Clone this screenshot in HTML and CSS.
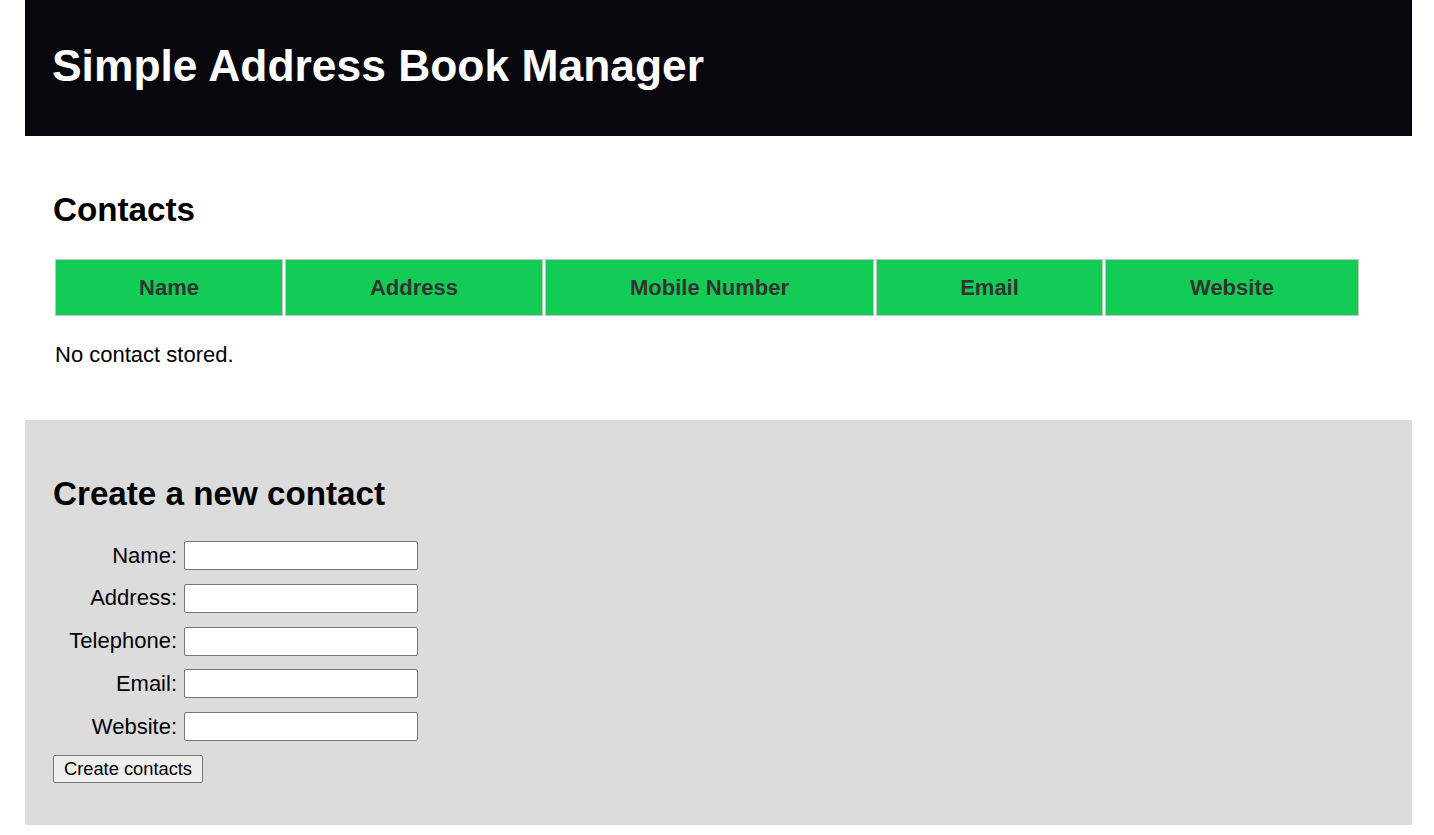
FILE: index.html
```html
<!DOCTYPE html>
<html lang="en">
<head>
<meta charset="utf-8">
<title>Simple Address Book Manager</title>
<link rel="stylesheet" href="styles.css">
</head>
<body>
<div class="page">
  <header class="masthead">
    <h1 class="title">Simple Address Book Manager</h1>
  </header>
  <section class="contacts">
    <h2 class="section-title">Contacts</h2>
    <table class="contact-table">
      <colgroup>
        <col class="c-name">
        <col class="c-address">
        <col class="c-mobile">
        <col class="c-email">
        <col class="c-website">
      </colgroup>
      <thead>
        <tr>
          <th>Name</th>
          <th>Address</th>
          <th>Mobile Number</th>
          <th>Email</th>
          <th>Website</th>
        </tr>
      </thead>
    </table>
    <p class="empty">No contact stored.</p>
  </section>
  <section class="create">
    <h2 class="section-title">Create a new contact</h2>
    <form class="contact-form">
      <label class="field-label" for="f-name">Name:</label>
      <input class="field-input" id="f-name" type="text">
      <label class="field-label" for="f-address">Address:</label>
      <input class="field-input" id="f-address" type="text">
      <label class="field-label" for="f-tel">Telephone:</label>
      <input class="field-input" id="f-tel" type="text">
      <label class="field-label" for="f-email">Email:</label>
      <input class="field-input" id="f-email" type="text">
      <label class="field-label" for="f-web">Website:</label>
      <input class="field-input" id="f-web" type="text">
      <div class="actions">
        <button class="submit" type="button">Create contacts</button>
      </div>
    </form>
  </section>
</div>
</body>
</html>
```

FILE: styles.css
```css
html, body {
  margin: 0;
  padding: 0;
  background: #ffffff;
}

body {
  font-family: "Liberation Sans", Arial, sans-serif;
  font-size: 22px;
  color: #000;
}

.page {
  margin-left: 25px;
  width: 1387px;
  padding-bottom: 10px;
}

.masthead {
  background: #08070d;
  height: 136px;
  display: flex;
  align-items: center;
  padding: 0 27px 4px;
  box-sizing: border-box;
}

.title {
  margin: 0;
  color: #ffffff;
  font-size: 44.4px;
  font-weight: bold;
}

.section-title {
  margin: 0;
  font-size: 33.2px;
  font-weight: bold;
}

.contacts {
  padding: 55px 28px 52px;
}

.contact-table {
  margin-top: 28px;
  margin-left: 0;
  width: 1308px;
  table-layout: fixed;
  border-collapse: separate;
  border-spacing: 2px;
}

.c-name { width: 228px; }
.c-address { width: 258px; }
.c-mobile { width: 329px; }
.c-email { width: 227px; }
.c-website { width: 254px; }

.contact-table th {
  background: #13cc55;
  color: #333333;
  border: 1px solid #c4c4c4;
  height: 57px;
  box-sizing: border-box;
  padding: 0;
  font-size: 22px;
  font-weight: bold;
  text-align: center;
  vertical-align: middle;
}

.empty {
  margin: 24px 0 0 2px;
  font-size: 22px;
}

.create {
  background: #dcdcdc;
  padding: 55px 28px 42px;
}

.contact-form {
  margin-top: 28px;
  display: grid;
  grid-template-columns: 124px 234px;
  column-gap: 7px;
  row-gap: 13.75px;
  align-items: center;
}

.field-label {
  text-align: right;
  font-size: 22px;
}

.field-input {
  width: 234px;
  height: 29px;
  box-sizing: border-box;
  margin: 0;
  border: 1px solid #767676;
  border-radius: 2px;
  background: #ffffff;
  font-size: 16px;
  padding: 2px 4px;
}

.actions {
  grid-column: 1 / -1;
}

.submit {
  display: block;
  width: 150px;
  height: 28px;
  box-sizing: border-box;
  margin: 0;
  padding: 0;
  font-family: "Liberation Sans", Arial, sans-serif;
  font-size: 18.3px;
  color: #000;
  background: #efefef;
  border: 1px solid #767676;
  border-radius: 2px;
}
```
